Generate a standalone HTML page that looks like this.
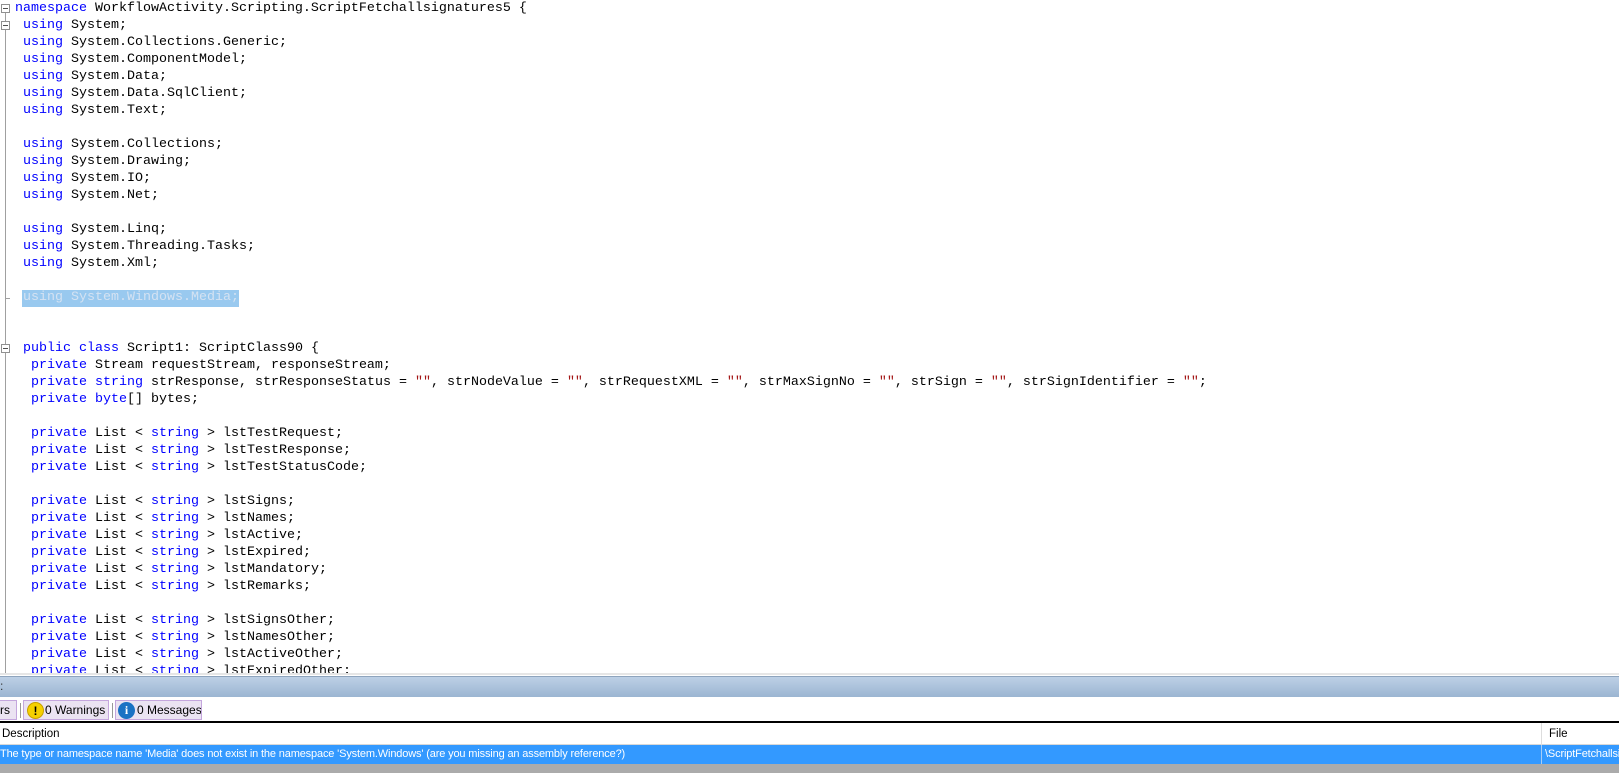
<!DOCTYPE html>
<html><head><meta charset="utf-8"><style>
*{margin:0;padding:0;box-sizing:border-box}
body{width:1619px;height:773px;overflow:hidden;background:#fff;position:relative;font-family:"Liberation Sans",sans-serif}
#ed{position:absolute;left:0;top:0;width:1619px;height:675px;background:#fff;overflow:hidden;border-bottom:2px solid #e6e6e6}
.l{position:absolute;left:15px;height:17px;line-height:17px;font-family:"Liberation Mono",monospace;font-size:13.33px;white-space:pre;color:#000}
.k{color:#0000ff}.s{color:#a31515}
.gl{position:absolute;left:5px;width:1px;background:#a0a0a0}
.fb{position:absolute;left:1px;width:9px;height:9px;border:1px solid #909090;background:#fff}
.fb:after{content:"";position:absolute;left:1px;top:3px;width:5px;height:1px;background:#505050}
#bar{position:absolute;left:0;top:676px;width:1619px;height:21px;background:linear-gradient(#bdd0e6,#9bb5d2);border-top:1px solid #8ea4bd}
#tabs{position:absolute;left:0;top:697px;width:1619px;height:25px;background:#fff}
.tab{position:absolute;top:3px;height:20px;background:#ebe3f2;border:1px solid #c4a6dd;font-size:12px;line-height:18px;color:#000;white-space:nowrap;overflow:hidden}
.ic{position:absolute;top:1px;width:17px;height:17px;border-radius:50%;text-align:center;font-weight:bold;font-size:12px;line-height:17px}
#blk{position:absolute;left:0;top:721px;width:1619px;height:2px;background:#000}
#hdr{position:absolute;left:0;top:723px;width:1619px;height:22px;background:#fff;font-size:11.5px;line-height:22px;border-bottom:1px solid #d8d8d8}
#row{position:absolute;left:0;top:745px;width:1619px;height:19px;background:#3399ff;color:#fff;font-size:11px;letter-spacing:-0.15px;line-height:19px;white-space:nowrap;overflow:hidden}
#gray{position:absolute;left:0;top:764px;width:1619px;height:9px;background:#ababab}
</style></head><body>
<div id="ed">
<div class="gl" style="top:10px;height:665px"></div>
<div class="fb" style="top:4px"></div>
<div class="fb" style="top:21px"></div>
<div class="fb" style="top:344px"></div>
<div style="position:absolute;left:5px;top:298px;width:5px;height:1px;background:#a0a0a0"></div>
<div style="position:absolute;left:22px;top:290px;width:217px;height:17px;background:#99c9ef"></div>
<div class="l" style="top:0px"><span class="k">namespace</span> WorkflowActivity.Scripting.ScriptFetchallsignatures5 {</div>
<div class="l" style="top:17px"> <span class="k">using</span> System;</div>
<div class="l" style="top:34px"> <span class="k">using</span> System.Collections.Generic;</div>
<div class="l" style="top:51px"> <span class="k">using</span> System.ComponentModel;</div>
<div class="l" style="top:68px"> <span class="k">using</span> System.Data;</div>
<div class="l" style="top:85px"> <span class="k">using</span> System.Data.SqlClient;</div>
<div class="l" style="top:102px"> <span class="k">using</span> System.Text;</div>
<div class="l" style="top:136px"> <span class="k">using</span> System.Collections;</div>
<div class="l" style="top:153px"> <span class="k">using</span> System.Drawing;</div>
<div class="l" style="top:170px"> <span class="k">using</span> System.IO;</div>
<div class="l" style="top:187px"> <span class="k">using</span> System.Net;</div>
<div class="l" style="top:221px"> <span class="k">using</span> System.Linq;</div>
<div class="l" style="top:238px"> <span class="k">using</span> System.Threading.Tasks;</div>
<div class="l" style="top:255px"> <span class="k">using</span> System.Xml;</div>
<div class="l" style="top:289px;color:#d4e2f2"> using System.Windows.Media;</div>
<div class="l" style="top:340px"> <span class="k">public</span> <span class="k">class</span> Script1: ScriptClass90 {</div>
<div class="l" style="top:357px">  <span class="k">private</span> Stream requestStream, responseStream;</div>
<div class="l" style="top:374px">  <span class="k">private</span> <span class="k">string</span> strResponse, strResponseStatus = <span class="s">""</span>, strNodeValue = <span class="s">""</span>, strRequestXML = <span class="s">""</span>, strMaxSignNo = <span class="s">""</span>, strSign = <span class="s">""</span>, strSignIdentifier = <span class="s">""</span>;</div>
<div class="l" style="top:391px">  <span class="k">private</span> <span class="k">byte</span>[] bytes;</div>
<div class="l" style="top:425px">  <span class="k">private</span> List &lt; <span class="k">string</span> &gt; lstTestRequest;</div>
<div class="l" style="top:442px">  <span class="k">private</span> List &lt; <span class="k">string</span> &gt; lstTestResponse;</div>
<div class="l" style="top:459px">  <span class="k">private</span> List &lt; <span class="k">string</span> &gt; lstTestStatusCode;</div>
<div class="l" style="top:493px">  <span class="k">private</span> List &lt; <span class="k">string</span> &gt; lstSigns;</div>
<div class="l" style="top:510px">  <span class="k">private</span> List &lt; <span class="k">string</span> &gt; lstNames;</div>
<div class="l" style="top:527px">  <span class="k">private</span> List &lt; <span class="k">string</span> &gt; lstActive;</div>
<div class="l" style="top:544px">  <span class="k">private</span> List &lt; <span class="k">string</span> &gt; lstExpired;</div>
<div class="l" style="top:561px">  <span class="k">private</span> List &lt; <span class="k">string</span> &gt; lstMandatory;</div>
<div class="l" style="top:578px">  <span class="k">private</span> List &lt; <span class="k">string</span> &gt; lstRemarks;</div>
<div class="l" style="top:612px">  <span class="k">private</span> List &lt; <span class="k">string</span> &gt; lstSignsOther;</div>
<div class="l" style="top:629px">  <span class="k">private</span> List &lt; <span class="k">string</span> &gt; lstNamesOther;</div>
<div class="l" style="top:646px">  <span class="k">private</span> List &lt; <span class="k">string</span> &gt; lstActiveOther;</div>
<div class="l" style="top:663px">  <span class="k">private</span> List &lt; <span class="k">string</span> &gt; lstExpiredOther;</div>
</div>
<div id="bar"><span style="position:absolute;left:0;top:2px;font-size:12px;color:#333">:</span></div>
<div id="tabs">
<div class="tab" style="left:-4px;width:21px;padding-left:3px">rs</div>
<div style="position:absolute;left:20px;top:6px;width:1px;height:15px;background:#999"></div>
<div class="tab" style="left:23px;width:86px;padding-left:21px"><span class="ic" style="left:3px;background:#f5d000;border:1px solid #c8a000;color:#000">!</span>0 Warnings</div>
<div style="position:absolute;left:112px;top:6px;width:1px;height:15px;background:#999"></div>
<div class="tab" style="left:115px;width:87px;padding-left:21px"><span class="ic" style="left:2px;background:#1a72c4;color:#fff;font-family:'Liberation Serif',serif">i</span>0 Messages</div>
</div>
<div id="blk"></div>
<div id="hdr"><span style="position:absolute;left:2px">Description</span><div style="position:absolute;left:1541px;top:0;width:1px;height:22px;background:#ddd"></div><span style="position:absolute;left:1549px">File</span></div>
<div id="row"><span style="position:absolute;left:0">The type or namespace name 'Media' does not exist in the namespace 'System.Windows' (are you missing an assembly reference?)</span><div style="position:absolute;left:1541px;top:0;width:1px;height:19px;background:#a8cdf5"></div><span style="position:absolute;left:1545px">\ScriptFetchallsignatures5</span></div>
<div id="gray"></div>
</body></html>
